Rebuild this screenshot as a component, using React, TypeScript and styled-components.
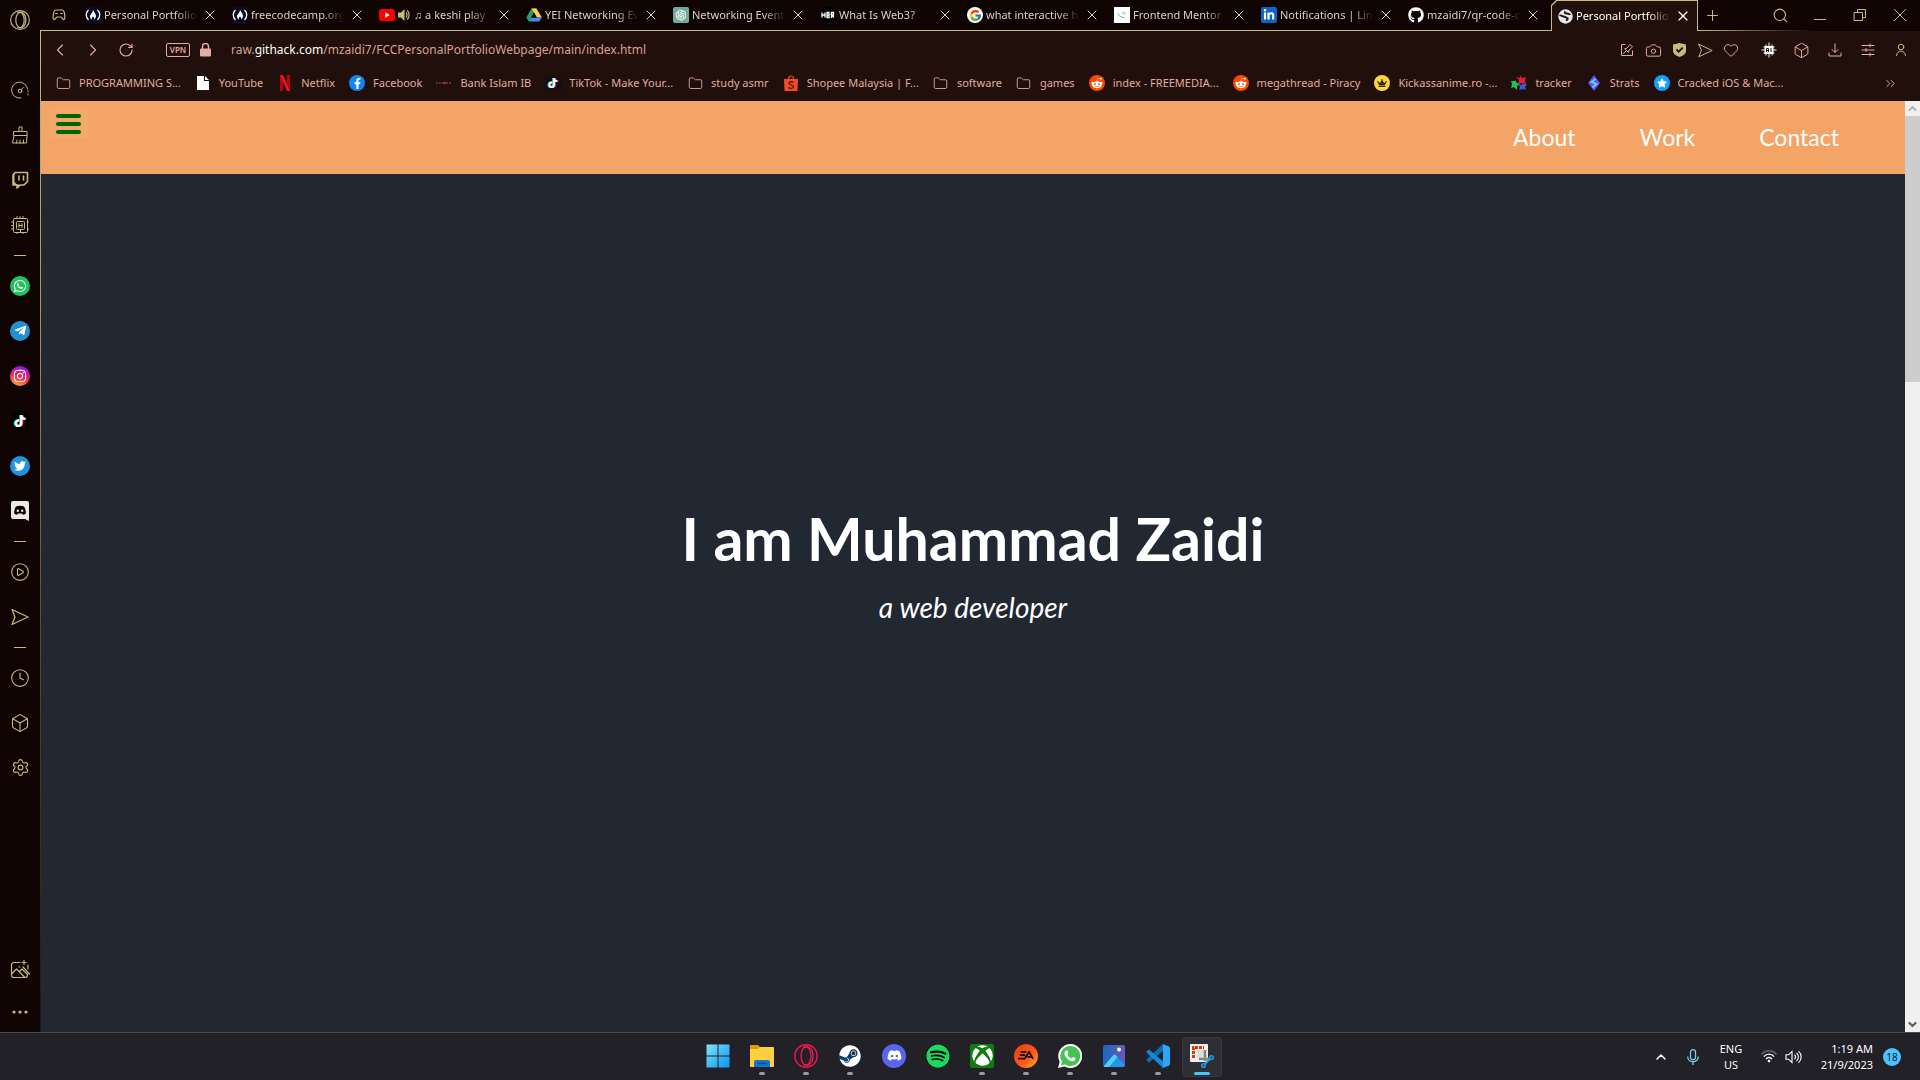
import React from "react";
import styled, { createGlobalStyle } from "styled-components";
import {
  Box, Camera, ChevronLeft, ChevronRight, ChevronUp, ChevronsRight, CirclePlay, Clock, Folder,
  Heart, Plus, RotateCw, Search, Settings, X,
} from "lucide-react";
import {
  FaDiscord, FaGithub, FaInstagram, FaLinkedinIn, FaRedditAlien, FaSpotify, FaSteam, FaTelegramPlane,
  FaTiktok, FaTwitter, FaWhatsapp, FaXbox, FaFacebookF, FaCrown, FaStar,
} from "react-icons/fa";
import { FcGoogle } from "react-icons/fc";
import { AiOutlineOpenAI } from "react-icons/ai";

const gold = "#c5bb80";
const rose = "#e2aca0";
const ui = `"Noto Sans", "Open Sans", sans-serif`;
const display = `Lato, "Open Sans", sans-serif`;

const Global = createGlobalStyle`
  * { box-sizing: border-box; }
  body { margin: 0; background: #100403; font-family: ${ui}; font-size: 11px; }
  button { border: 0; padding: 0; background: none; color: inherit; font: inherit; }
  a { color: inherit; text-decoration: none; }
  svg { display: block; flex: none; }
`;

const Desktop = styled.div`
  display: flex;
  flex-direction: column;
  height: 100vh;
  overflow: hidden;
`;
const Browser = styled.div`
  flex: 1;
  min-height: 0;
  display: flex;
`;
const Rail = styled.aside`
  width: 40px;
  flex: none;
  display: flex;
  flex-direction: column;
  background: #100403;
  color: ${gold};
`;
const RailButton = styled.button<{ $tall?: number }>`
  height: ${(p) => p.$tall || 45}px;
  display: grid;
  place-items: center;
  flex: none;
`;
const RailRule = styled.div`
  height: 16px;
  display: grid;
  place-items: center;
  flex: none;
  &::after { content: ""; width: 12px; height: 1px; background: ${gold}; }
`;
const RailGap = styled.div<{ $size?: number }>`
  flex: ${(p) => (p.$size ? "none" : "1")};
  height: ${(p) => p.$size || 0}px;
`;
const Disc = styled.span<{ $bg: string; $fg?: string; $size?: number; $square?: boolean }>`
  width: ${(p) => p.$size || 16}px;
  height: ${(p) => p.$size || 16}px;
  flex: none;
  display: grid;
  place-items: center;
  border-radius: ${(p) => (p.$square ? "2px" : "50%")};
  background: ${(p) => p.$bg};
  color: ${(p) => p.$fg || "#fff"};
`;
const Windowed = styled.div`
  flex: 1;
  min-width: 0;
  display: flex;
  flex-direction: column;
`;
const Strip = styled.div`
  height: 31px;
  flex: none;
  display: flex;
  background: #100403;
  color: ${gold};
`;
const Corner = styled.button`
  width: 41px;
  padding-right: 3px;
  border-bottom: 1px solid ${gold};
  display: grid;
  place-items: center;
`;
const TabShell = styled.div<{ $active?: boolean }>`
  width: 147px;
  flex: none;
  padding: ${(p) => (p.$active ? "1px 1px 0" : "0 0 1px")};
  background: ${gold};
  clip-path: ${(p) => (p.$active ? "polygon(0 5px, 5px 0, 100% 0, 100% 100%, 0 100%)" : "none")};
`;
const TabBody = styled.div<{ $active?: boolean }>`
  height: 100%;
  display: flex;
  align-items: center;
  gap: 3px;
  padding: 0 ${(p) => (p.$active ? 6 : 10)}px 0 ${(p) => (p.$active ? 6 : 4)}px;
  background: ${(p) => (p.$active ? "#200f0a" : "#100403")};
  color: ${(p) => (p.$active ? "#fff" : "#d6d0ce")};
  clip-path: ${(p) => (p.$active ? "polygon(0 5px, 5px 0, 100% 0, 100% 100%, 0 100%)" : "none")};
`;
const TabTitle = styled.a`
  flex: 1;
  min-width: 0;
  display: flex;
  align-items: center;
  gap: 4px;
  overflow: hidden;
  white-space: nowrap;
  line-height: 20px;
  mask-image: linear-gradient(to right, #000 76%, transparent);
`;
const TabClose = styled.button`
  width: 17px;
  height: 20px;
  display: grid;
  place-items: center;
`;
const StripEnd = styled.div`
  flex: 1;
  display: flex;
  justify-content: space-between;
  border-bottom: 1px solid;
  border-image: linear-gradient(to right, ${gold}, transparent 52%) 1;
`;
const StripButton = styled.button<{ $wide?: boolean }>`
  width: ${(p) => (p.$wide ? 40 : 28)}px;
  display: grid;
  place-items: center;
`;
const Cluster = styled.div<{ $indent?: boolean }>`
  display: flex;
  align-items: center;
  margin-left: ${(p) => (p.$indent ? 8 : 0)}px;
`;
const Frame = styled.div`
  flex: 1;
  min-height: 0;
  display: flex;
  flex-direction: column;
  padding-left: 1px;
  background: linear-gradient(${gold}, #a09258 30%, #5d4c2c 60%, #1d1712);
`;
const Toolbar = styled.div`
  height: 38px;
  flex: none;
  display: flex;
  align-items: center;
  padding: 0 3px 0 2px;
  background: #200f0a;
  color: ${rose};
`;
const ToolButton = styled.button<{ $wide?: boolean; $gold?: boolean }>`
  width: ${(p) => (p.$wide ? 33 : 26)}px;
  height: 28px;
  display: grid;
  place-items: center;
  color: ${(p) => (p.$gold ? gold : rose)};
`;
const Vpn = styled.button`
  width: 24px;
  height: 14px;
  margin: 0 10px 0 24px;
  border: 1px solid ${rose};
  border-radius: 2px;
  font-size: 8px;
  line-height: 12px;
  font-weight: 600;
`;
const Address = styled.div`
  flex: 1;
  margin-left: 20px;
  font-size: 12px;
  line-height: 20px;
  color: #d9a195;
  white-space: nowrap;
  outline: 0;
  b { font-weight: 400; color: #fff; }
`;
const Marks = styled.nav`
  height: 32px;
  flex: none;
  display: flex;
  align-items: center;
  gap: 14px;
  padding: 0 22px 4px 14px;
  background: #200f0a;
  color: ${rose};
`;
const Mark = styled.a`
  display: flex;
  align-items: center;
  gap: 8px;
  white-space: nowrap;
  line-height: 20px;
`;
const MarkIcon = styled.span`
  width: 16px;
  display: grid;
  place-items: center;
`;
const MoreMarks = styled.button`
  margin-left: auto;
`;
const View = styled.div`
  flex: 1;
  min-height: 0;
  display: flex;
`;
const Page = styled.main`
  flex: 1;
  display: flex;
  flex-direction: column;
  background: #222831;
  color: #fff;
  font-family: ${display};
`;
const SiteNav = styled.header`
  height: 73px;
  flex: none;
  display: flex;
  justify-content: space-between;
  align-items: center;
  padding: 0 66px 2px 8px;
  background: #f4a466;
`;
const Burger = styled.button`
  align-self: flex-start;
  width: 39px;
  height: 30px;
  margin-top: 7px;
  padding-top: 2px;
  display: flex;
  flex-direction: column;
  align-items: center;
  justify-content: center;
  gap: 4px;
  background: #f4a96b;
`;
const BurgerBar = styled.span`
  width: 25px;
  height: 4px;
  border-radius: 2px;
  background: #006400;
`;
const Links = styled.nav`
  display: flex;
  gap: 64px;
  font-size: 23px;
  line-height: 32px;
`;
const Hero = styled.section`
  flex: 1;
  display: flex;
  flex-direction: column;
  align-items: center;
  justify-content: center;
  gap: 16px;
  padding-bottom: 80px;
`;
const HeroTitle = styled.h1`
  margin: 0;
  font-size: 59px;
  line-height: 72px;
  font-weight: 700;
`;
const HeroText = styled.p`
  margin: 0;
  font-size: 28px;
  line-height: 32px;
  font-style: italic;
`;
const Scroll = styled.div`
  width: 15px;
  display: flex;
  flex-direction: column;
  background: #f0f0f0;
`;
const ScrollButton = styled.button<{ $dim?: boolean }>`
  height: 15px;
  display: grid;
  place-items: center;
  color: ${(p) => (p.$dim ? "#b5b5b5" : "#606060")};
`;
const Track = styled.div`
  flex: 1;
  &::before { content: ""; display: block; height: 29.5%; background: #cdcdcd; }
`;
const Taskbar = styled.footer`
  height: 48px;
  flex: none;
  display: grid;
  grid-template-columns: 1fr auto 1fr;
  border-top: 1px solid #4a4849;
  background: #212127;
  color: #fff;
`;
const Apps = styled.div`
  grid-column: 2;
  display: flex;
  gap: 4px;
  align-items: center;
`;
const TaskButton = styled.button<{ $state?: "idle" | "open" | "active" }>`
  width: 40px;
  height: 40px;
  display: grid;
  grid-template-rows: 1fr 3px;
  justify-items: center;
  align-items: center;
  padding: 3px 0 2px;
  border-radius: 4px;
  background: ${(p) => (p.$state === "active" ? "#2e2f35" : "none")};
  box-shadow: ${(p) => (p.$state === "active" ? "inset 0 0 0 1px #37383d" : "none")};
  &::after {
    content: "";
    width: ${(p) => (p.$state === "active" ? 16 : 6)}px;
    height: 3px;
    border-radius: 2px;
    background: ${(p) => (p.$state === "active" ? "#4cc2ff" : p.$state === "open" ? "#9a9a9d" : "none")};
  }
`;
const Tray = styled.div`
  display: flex;
  justify-content: flex-end;
  align-items: center;
  padding-right: 19px;
`;
const TrayButton = styled.button<{ $w: number; $align?: string }>`
  width: ${(p) => p.$w}px;
  line-height: 16px;
  display: grid;
  justify-items: ${(p) => p.$align || "center"};
`;
const Badge = styled.span`
  width: 18px;
  height: 18px;
  margin-left: 10px;
  border-radius: 50%;
  background: #4cc2ff;
  color: #10202c;
  font-size: 10px;
  line-height: 18px;
  text-align: center;
`;

type IconProps = { size?: number; w?: number; children: React.ReactNode; box?: number };
const Line = ({ size = 18, w = 1, box = 18, children }: IconProps) => (
  <svg width={size} height={size} viewBox={`0 0 ${box} ${box}`} fill="none" stroke="currentColor" strokeWidth={w} strokeLinejoin="round" strokeLinecap="round">
    {children}
  </svg>
);
const Send = ({ size = 18 }) => <Line size={size} w={1.2}><path d="M1 1.5 17 9 1 16.5 4 9Z" /></Line>;
const OperaIcon = ({ size = 20, color = gold }) => (
  <svg width={size} height={size} viewBox="0 0 24 24" fill="none" stroke={color} strokeWidth="1.4">
    <circle cx="12" cy="12" r="11.2" />
    <ellipse cx="12" cy="12" rx="5" ry="9" />
    <path d="M9 3.5c5-3 10 1 10 8.500s-5 11.500-10 8.500" />
  </svg>
);
const Fcc = () => (
  <svg width="16" height="16" viewBox="0 0 16 16" fill="none" stroke="#fff" strokeWidth="1.3">
    <path d="M0 0h16v16H0z" fill="#0a0a23" stroke="none" />
    <path d="M3.500 3C.5 5.500.5 10 3.500 13M12.500 3c3 2.500 3 7 0 10" />
    <path d="M8 2.500c.2 2 3 4 3 6.500 0 2-1.200 3-2 3.500.6-1.500-.3-2.500-1-3-.7.7-1.500 1.500-1 3C5.500 12 5 10.500 5 9.500c0-1.500 1-2 1.300-3C7.500 5.500 8 4 8 2.500Z" fill="#fff" stroke="none" />
  </svg>
);
const YouTube = () => (
  <svg width="16" height="16" viewBox="0 0 16 16"><rect y="2" width="16" height="12" rx="3" fill="#f00" /><path d="m6.300 5.300 4.400 2.700-4.400 2.700z" fill="#fff" /></svg>
);
const Speaker = () => (
  <svg width="12" height="14" viewBox="0 0 12 14" fill="none" stroke={gold} strokeWidth="1.200"><path d="M0 4.500h3L6.500 1v12L3 9.500H0z" fill={gold} stroke="none" /><path d="M8 4.500c1.300 1 1.300 4 0 5M9.200 2.500c2.500 2 2.500 7 0 9" /></svg>
);
const Drive = () => (
  <svg width="16" height="16" viewBox="0 0 16 16"><path d="M5.500 1.500h5l-7.700 13L.3 10.500z" fill="#1ea362" /><path d="M5.500 1.500h5l5.300 9h-5z" fill="#ffcf48" /><path d="M5 10.500h10.800l-2.500 4H2.800z" fill="#4688f4" /><path d="m8 5.500 2.800 5H5z" fill="#100403" /></svg>
);
const Globe = () => (
  <svg width="15" height="15" viewBox="0 0 15 15"><circle cx="7.500" cy="7.500" r="7.200" fill="#e6e6ec" /><path d="M1.500 6.500c2-.5 2.500.8 4 1s2.500 1 4 1.500c1 1-.5 2-1.500 2.500M7.500 2.500c-1.500 1-.5 2 1.500 2 1.500.2 2.500 1 3.500.5" stroke="#200f0a" strokeWidth="1.800" fill="none" /></svg>
);
const Mentor = () => (
  <svg width="16" height="16" viewBox="0 0 16 16" fill="none"><path d="M0 0h16v16H0z" fill="#fff" /><path d="M4 6.500c1 2.500 2.500 4 6.500 4" stroke="#8d97ba" /><path d="M9 4.500v2.500m2-2-1 1.500 1.500 1" stroke="#7cc7d0" /></svg>
);
const TikTok = ({ size = 10 }) => <FaTiktok size={size} style={{ filter: "drop-shadow(-1px 0 #25f4ee) drop-shadow(1px 0 #fe2c55)" }} />;
const FolderIcon = () => <Folder size={15} strokeWidth={1.4} />;
const Reddit = () => <Disc $bg="#ff4500"><FaRedditAlien size={12} /></Disc>;

type TabInfo = { icon: React.ReactNode; title: React.ReactNode };
const tabs: TabInfo[] = [
  { icon: <Fcc />, title: "Personal Portfolio" },
  { icon: <Fcc />, title: "freecodecamp.org" },
  { icon: <YouTube />, title: <><Speaker /> ♫ a keshi play</> },
  { icon: <Drive />, title: "YEI Networking Ev" },
  { icon: <Disc $bg="#74aa9c" $square><AiOutlineOpenAI size={14} /></Disc>, title: "Networking Event" },
  {
    icon: (
      <Disc $bg="#000">
        <svg width="14" height="8" viewBox="0 0 14 8" stroke="#fff" strokeWidth="1.300" fill="none"><path d="M1 1.500v5M4 1.500v5M1 4h3M6 1.500h2v5H6zM6 4h2M10.500 7V1.500h2V4h-2l2.500 2.500" /></svg>
      </Disc>
    ),
    title: "What Is Web3?",
  },
  { icon: <Disc $bg="#fff"><FcGoogle size={13} /></Disc>, title: "what interactive h" },
  { icon: <Mentor />, title: "Frontend Mentor" },
  { icon: <Disc $bg="#0a66c2" $square><FaLinkedinIn size={12} /></Disc>, title: "Notifications | Link" },
  { icon: <FaGithub size={16} color="#fff" />, title: "mzaidi7/qr-code-c" },
];

const bookmarks: [React.ReactNode, string][] = [
  [<FolderIcon />, "PROGRAMMING S..."],
  [<svg width="12" height="14" viewBox="0 0 12 14" fill="#fff"><path d="M0 0h7v5h5v9H0zM8 0l4 4H8z" /></svg>, "YouTube"],
  [<svg width="10" height="16" viewBox="0 0 10 16"><path d="M0 0h3v16H0zM7 0h3v16H7z" fill="#b00710" /><path d="M0 0h3l7 16H7z" fill="#f5121d" /></svg>, "Netflix"],
  [<Disc $bg="#1185f2"><FaFacebookF size={11} /></Disc>, "Facebook"],
  [<svg width="16" height="6" viewBox="0 0 16 6" fill="none"><path d="M0 3h7M10 3h6" stroke="#77605b" strokeDasharray="2 1" /><path d="M7 2h3v2H7z" fill="#a52b38" /></svg>, "Bank Islam IB"],
  [<Disc $bg="#170c16" $square><TikTok /></Disc>, "TikTok - Make Your..."],
  [<FolderIcon />, "study asmr"],
  [<svg width="14" height="16" viewBox="0 0 14 16" fill="none"><path d="M0 4h14l-.5 12H.5z" fill="#f04b2b" /><path d="M4.500 4c0-4 5-4 5 0" stroke="#f04b2b" strokeWidth="1.200" /><path d="M9.300 7.500C8 6.300 5 6.500 5 8.200c0 2 4.500 1.500 4.500 3.500 0 2-3.500 2-5 .7" stroke="#5a1509" strokeWidth="1.300" /></svg>, "Shopee Malaysia | F..."],
  [<FolderIcon />, "software"],
  [<FolderIcon />, "games"],
  [<Reddit />, "index - FREEMEDIA..."],
  [<Reddit />, "megathread - Piracy"],
  [<Disc $bg="#fcd93a" $fg="#3a2b08"><FaCrown size={10} /></Disc>, "Kickassanime.ro -..."],
  [<svg width="16" height="16" viewBox="0 0 16 16"><path d="m9 0 2 3 4-1-1 4 1 3-4-1-4 1 1-4-3-3 4 1z" fill="#e01f3f" /><path d="m4 5 2 3 3 1-3 2v4l-3-3-3 1 1-4-1-3h4z" fill="#17c653" /><path d="m11 7 1 2h4l-2 3 1 3-3-1-4 1 1-3-2-3 4 1z" fill="#3f55e8" /></svg>, "tracker"],
  [<svg width="12" height="16" viewBox="0 0 12 16"><path d="m6 0 6 8-6 8-6-8z" fill="#6a4ff0" /><path d="M7.500 4 3.500 7l5 2-4 3.500" stroke="#58dcf6" strokeWidth="1.800" fill="none" /></svg>, "Strats"],
  [<Disc $bg="#12a0ff"><FaStar size={10} /></Disc>, "Cracked iOS & Mac..."],
];

const Shot = () => (
  <svg width="24" height="24" viewBox="0 0 24 24" fill="none">
    <rect x="0" y="0" width="18" height="18" rx="1" fill="#f1f1f1" />
    <path d="M3.500 14V3.500H14" stroke="#d83b01" strokeWidth="3" strokeDasharray="3 1" />
    <path d="M7 6h7v8H7z" fill="#dcdcdc" /><path d="M15 6v11M9 15h11" stroke="#7f868c" strokeWidth="2.500" />
    <circle cx="21.500" cy="13.500" r="1.800" stroke="#1e9ce8" strokeWidth="1.600" /><circle cx="13.500" cy="21.500" r="1.800" stroke="#1e9ce8" strokeWidth="1.600" />
    <path d="m15 20 5-5" stroke="#1e9ce8" strokeWidth="1.800" />
  </svg>
);

type AppInfo = { name: string; state: "idle" | "open" | "active"; icon: React.ReactNode };
const apps: AppInfo[] = [
  {
    name: "Start", state: "idle", icon: (
      <svg width="24" height="24" viewBox="0 0 24 24"><defs><linearGradient id="win" x1="0" y1="0" x2="1" y2="1"><stop stopColor="#7fe6fb" /><stop offset="1" stopColor="#0a92f5" /></linearGradient></defs><path d="M.5.5h11v11H.5zM12.500.5h11v11h-11zM.5 12.500h11v11H.5zM12.500 12.500h11v11h-11z" fill="url(#win)" /></svg>
    ),
  },
  {
    name: "File Explorer", state: "open", icon: (
      <svg width="24" height="22" viewBox="0 0 24 22"><path d="M0 1q0-1 1-1h7l2 2v4H0z" fill="#e09a08" /><path d="M0 4h8l2-2h13q1 0 1 1v18q0 1-1 1H1q-1 0-1-1z" fill="#ffcf3e" /><path d="M4 22v-5q0-2 2-2h12q2 0 2 2v5z" fill="#1275cf" /><path d="M7 18.500h10" stroke="#0b4f94" strokeWidth="1.500" /></svg>
    ),
  },
  { name: "Opera GX", state: "open", icon: <OperaIcon size={24} color="#e21c4a" /> },
  { name: "Steam", state: "open", icon: <Disc $bg="linear-gradient(#101c3a,#0b5d8d)" $size={22}><FaSteam size={22} /></Disc> },
  { name: "Discord", state: "idle", icon: <Disc $bg="#5865f2" $size={24}><FaDiscord size={15} /></Disc> },
  { name: "Spotify", state: "idle", icon: <Disc $bg="#000" $size={24}><FaSpotify size={24} color="#1ed760" /></Disc> },
  { name: "Xbox", state: "open", icon: <Disc $bg="#107c10" $size={24} $square><FaXbox size={21} /></Disc> },
  {
    name: "EA", state: "open", icon: (
      <Disc $bg="linear-gradient(135deg,#e23c16,#ff5a1c 60%,#ffb21c)" $size={24}>
        <svg width="16" height="9" viewBox="0 0 18 10" fill="none" stroke="#140804" strokeWidth="2"><path d="M3 1h6.500M2 4.500h6M0 8.500h7.500L12.500.8l4.500 8M10.500 6.500h5" /></svg>
      </Disc>
    ),
  },
  {
    name: "WhatsApp", state: "open", icon: (
      <svg width="24" height="24" viewBox="0 0 24 24"><path d="M12 0a12 12 0 1 1-5.500 22.500L0 24l1.700-6.200A12 12 0 0 1 12 0" fill="#fff" /><path d="M12 2a10 10 0 1 1-5 18.500l-4 1 1-4A10 10 0 0 1 12 2" fill="#45c254" /><path d="M8.300 6.300c.5-.3 1 0 1.200.4l.8 1.900c.2.7-1 1.400-.9 1.800.7 1.800 2.200 3.100 4.100 3.900.6.1 1.300-1.500 1.900-1.200l2 1c.6.4-.1 2-.7 2.500-1.200 1-3 .8-4.500.1-2.400-1-4.600-3.200-5.500-5.600-.6-1.500-.1-3.800 1.600-4.800z" fill="#fff" /></svg>
    ),
  },
  {
    name: "Photos", state: "open", icon: (
      <svg width="22" height="22" viewBox="0 0 22 22"><defs><linearGradient id="ph"><stop stopColor="#1769c4" /><stop offset="1" stopColor="#6b58b8" /></linearGradient></defs><rect width="22" height="22" rx="2" fill="url(#ph)" /><circle cx="16" cy="4.500" r="2" fill="#fff" /><path d="m1 21 9.500-11q1-1 2 0L22 20q-.5 2-2 2H2q-1 0-1-1" fill="#1e9ae6" /><path d="m1 21 9.500-11q1-1 2 0l2 2L6 22H2q-1 0-1-1" fill="#4fd0f7" /></svg>
    ),
  },
  {
    name: "Visual Studio Code", state: "open", icon: (
      <svg width="24" height="24" viewBox="0 0 24 24"><path d="M18 6 3 18.500.5 16.500v-1L17 0z" fill="#0a6fb8" /><path d="M18 18 3 5.500.5 7.500v1L17 24z" fill="#1488d4" /><path d="m17 0 6 2.500q1 .5 1 1.500v16q0 1-1 1.500L17 24z" fill="#2aa6f2" /></svg>
    ),
  },
  { name: "Snipping Tool", state: "active", icon: <Shot /> },
];

export default function App() {
  return (
    <Desktop>
      <Global />
      <Browser>
        <Rail>
          <RailButton $tall={40} aria-label="Opera menu"><OperaIcon /></RailButton>
          <RailGap $size={27} />
          <RailButton aria-label="GX Control"><Line><path d="M10 17A8 8 0 1 1 16.500 8" /><circle cx="9" cy="10" r="1.800" /><path d="m10.300 8.700 2-2.200" /><path d="M17 10v5" strokeDasharray="1 2" /></Line></RailButton>
          <RailButton aria-label="GX Cleaner"><Line><path d="M8 5.500V1h3v4.500M3 5.500h13v4H3zM3 9.500 1.500 17h14l.5-7.500M5.500 17l.5-3M9 17v-3M12.500 17v-3" /></Line></RailButton>
          <RailButton aria-label="Twitch"><Line w={1.6}><path d="M4 1.500h12.500v9L13 14H9.500L6 17v-3H2V4z" /><path d="M2 4v10h4v3l3-3.500H6L3.500 11V2.500z" fill="currentColor" stroke="none" /><path d="M8 5v4M12.500 5v4" /></Line></RailButton>
          <RailButton aria-label="Limiter"><Line><rect x="2.500" y="2.500" width="14" height="14" rx="1" /><rect x="5.500" y="5.500" width="8" height="8" rx="1" /><path d="M8 7.500v4M11 7.500v4M8 9.500h3M6 .5v2M9 .5v2M12 .5v2M6 16.500v1M12 16.500v1M.5 6h2M.5 9.500h2M.5 13h2M16.500 6h1M16.500 13h1M9.500 13.500v3" /></Line></RailButton>
          <RailRule />
          <RailButton aria-label="WhatsApp"><Disc $bg="#22c35e" $size={20}><FaWhatsapp size={14} /></Disc></RailButton>
          <RailButton aria-label="Telegram"><Disc $bg="#2291d0" $size={20}><FaTelegramPlane size={13} /></Disc></RailButton>
          <RailButton aria-label="Instagram"><Disc $bg="linear-gradient(20deg,#ffb52e 5%,#f5264f 45%,#b115c9 75%,#6a22e8)" $size={20}><FaInstagram size={14} /></Disc></RailButton>
          <RailButton aria-label="TikTok"><Disc $bg="#000" $size={20}><TikTok size={12} /></Disc></RailButton>
          <RailButton aria-label="Twitter"><Disc $bg="#1c94e0" $size={20}><FaTwitter size={12} /></Disc></RailButton>
          <RailButton aria-label="Discord"><svg width="18" height="20" viewBox="0 0 18 20"><path d="M2 0h14q2 0 2 2v18l-4-2H2q-2 0-2-2V2q0-2 2-2" fill="#ebe8ea" /><path d="M5 5.500c2.500-1 5.500-1 8 0 1.500 2.200 2 4.500 1.800 7-1 .8-2 1.200-3 1.300l-.8-1.300H7l-.8 1.300c-1-.1-2-.5-3-1.300-.2-2.500.3-4.800 1.800-7" fill="#100403" /><circle cx="6.800" cy="9.700" r="1.200" fill="#ebe8ea" /><circle cx="11.200" cy="9.700" r="1.200" fill="#ebe8ea" /></svg></RailButton>
          <RailRule />
          <RailButton aria-label="Player"><CirclePlay size={20} strokeWidth={1.3} /></RailButton>
          <RailButton aria-label="My Flow"><Send /></RailButton>
          <RailRule />
          <RailButton aria-label="History"><Clock size={20} strokeWidth={1.3} /></RailButton>
          <RailButton aria-label="Extensions"><Box size={20} strokeWidth={1.3} /></RailButton>
          <RailButton aria-label="Settings"><Settings size={19} strokeWidth={1.4} /></RailButton>
          <RailGap />
          <RailButton aria-label="Wallpapers"><Line size={20} box={20} w={1.2}><path d="M10 2.500H4Q1.500 2.500 1.500 5v10Q1.500 17.500 4 17.500h11Q17.500 17.500 17.500 15v-1M1.500 14l5-5 8 8M9.500 11.500 12 9l5 5M12 2.500h4M14 .5v4M13 7l6.500 7M18 5v4M9 7h1" /></Line></RailButton>
          <RailButton $tall={40} aria-label="More"><svg width="16" height="4" viewBox="0 0 16 4" fill="currentColor"><circle cx="2" cy="2" r="1.600" /><circle cx="8" cy="2" r="1.600" /><circle cx="14" cy="2" r="1.600" /></svg></RailButton>
        </Rail>
        <Windowed>
          <Strip>
            <Corner aria-label="GX Corner"><Line size={14} box={14} w={1.2}><path d="M4 2h6c3 0 3.500 9 2 9.500S10 9 9 9H5c-1 0-1.500 3-3 2.500S1 2 4 2Z" /><path d="M3.500 5.500h2M8.500 5.500h2" /></Line></Corner>
            {tabs.map((t, i) => (
              <TabShell key={i}>
                <TabBody>
                  {t.icon}
                  <TabTitle href="#">{t.title}</TabTitle>
                  <TabClose aria-label="Close tab"><X size={16} strokeWidth={1.5} /></TabClose>
                </TabBody>
              </TabShell>
            ))}
            <TabShell $active>
              <TabBody $active>
                <Globe />
                <TabTitle href="#">Personal Portfolio</TabTitle>
                <TabClose aria-label="Close tab"><X size={16} strokeWidth={1.8} /></TabClose>
              </TabBody>
            </TabShell>
            <StripEnd>
              <StripButton aria-label="New tab"><Plus size={17} strokeWidth={1.5} /></StripButton>
              <Cluster>
                <StripButton $wide aria-label="Search tabs"><Search size={17} strokeWidth={1.5} /></StripButton>
                <StripButton $wide aria-label="Minimize"><Line size={12} box={12}><path d="M0 10.500h12" /></Line></StripButton>
                <StripButton $wide aria-label="Restore"><Line size={14} box={14}><path d="M1.500 4.500h8v8h-8zM4.500 4.500v-3h8v8h-3" /></Line></StripButton>
                <StripButton $wide aria-label="Close window"><Line size={14} box={14}><path d="m1.500 1.500 11 11M12.500 1.500l-11 11" /></Line></StripButton>
              </Cluster>
            </StripEnd>
          </Strip>
          <Frame>
            <Toolbar>
              <ToolButton $wide aria-label="Back"><ChevronLeft size={20} strokeWidth={1.4} /></ToolButton>
              <ToolButton $wide aria-label="Forward"><ChevronRight size={20} strokeWidth={1.4} /></ToolButton>
              <ToolButton $wide aria-label="Reload"><RotateCw size={16} strokeWidth={1.7} /></ToolButton>
              <Vpn>VPN</Vpn>
              <svg width="11" height="14" viewBox="0 0 11 14"><path d="M2.500 6V3.500a3 3 0 0 1 6 0V6" fill="none" stroke={rose} strokeWidth="1.500" /><rect y="5.500" width="11" height="8" rx="1" fill={rose} /></svg>
              <Address contentEditable suppressContentEditableWarning role="textbox" aria-label="Address" spellCheck={false}>
                raw.<b>githack.com</b>/mzaidi7/FCCPersonalPortfolioWebpage/main/index.html
              </Address>
              <ToolButton aria-label="Pin"><Line size={14} box={14}><path d="M5 1.500H1.500v11h11V8M3.500 10.500 6.500 7.500M5 6l3.500 3.500.5-2.500 3.500-3L10 1.500 7 5z" /></Line></ToolButton>
              <ToolButton aria-label="Snapshot"><Camera size={17} strokeWidth={1.4} /></ToolButton>
              <ToolButton aria-label="Ad blocker"><svg width="13" height="14" viewBox="0 0 13 14"><path d="M6.500 0 13 1.500V8c0 3-3.500 5-6.500 6C3.500 13 0 11 0 8V1.500z" fill={gold} /><path d="m3.500 6.500 2.200 2.200 4-4" stroke="#200f0a" strokeWidth="1.800" fill="none" /></svg></ToolButton>
              <ToolButton $gold aria-label="Send to My Flow"><Send size={15} /></ToolButton>
              <ToolButton aria-label="Bookmark"><Heart size={16} strokeWidth={1.4} /></ToolButton>
              <Cluster $indent>
                <ToolButton $wide aria-label="Aria"><svg width="16" height="16" viewBox="0 0 16 16"><path d="M8 .500v15M.5 8h15M5 2.500v11M11 2.500v11M2.500 5h11M2.500 11h11" stroke="#8d8280" strokeWidth="2.200" /><rect x="3.500" y="4" width="9" height="8" fill="#fff" /><path d="M5.500 10V6.500h2V10M5.500 8.500h2M10 6v4" stroke="#222" fill="none" /></svg></ToolButton>
                <ToolButton $wide aria-label="Extensions"><Box size={17} strokeWidth={1.4} /></ToolButton>
                <ToolButton $wide aria-label="Downloads"><Line size={14} box={14}><path d="M7 1v8M4 6.500 7 9.500l3-3M1 10v3h12v-3" /></Line></ToolButton>
                <ToolButton $wide aria-label="Easy setup"><Line size={14} box={14}><path d="M1 2.500h12M1 7h12M1 11.500h12M9 1v3M5 5.500v3M9 10v3" /></Line></ToolButton>
                <ToolButton $wide $gold aria-label="Profile"><Line size={14} box={14}><circle cx="7" cy="4" r="2.800" /><path d="M2.500 12.500C3 6.500 11 6.500 11.500 12.500" /></Line></ToolButton>
              </Cluster>
            </Toolbar>
            <Marks aria-label="Bookmarks">
              {bookmarks.map(([icon, label], i) => (
                <Mark href="#" key={i}><MarkIcon>{icon}</MarkIcon>{label}</Mark>
              ))}
              <MoreMarks aria-label="More bookmarks"><ChevronsRight size={15} strokeWidth={1.5} /></MoreMarks>
            </Marks>
            <View>
              <Page>
                <SiteNav>
                  <Burger aria-label="Menu"><BurgerBar /><BurgerBar /><BurgerBar /></Burger>
                  <Links><a href="#about">About</a><a href="#work">Work</a><a href="#contact">Contact</a></Links>
                </SiteNav>
                <Hero>
                  <HeroTitle>I am Muhammad Zaidi</HeroTitle>
                  <HeroText>a web developer</HeroText>
                </Hero>
              </Page>
              <Scroll>
                <ScrollButton $dim aria-label="Scroll up"><Line size={9} box={9} w={2.2}><path d="M1.500 6 4.500 3l3 3" /></Line></ScrollButton>
                <Track />
                <ScrollButton aria-label="Scroll down"><Line size={9} box={9} w={2.2}><path d="m1.500 3 3 3 3-3" /></Line></ScrollButton>
              </Scroll>
            </View>
          </Frame>
        </Windowed>
      </Browser>
      <Taskbar>
        <Apps>
          {apps.map((a) => <TaskButton key={a.name} $state={a.state} aria-label={a.name}>{a.icon}</TaskButton>)}
        </Apps>
        <Tray>
          <TrayButton $w={32} aria-label="Hidden icons"><ChevronUp size={16} strokeWidth={2.2} /></TrayButton>
          <TrayButton $w={32} aria-label="Microphone"><svg width="12" height="16" viewBox="0 0 12 16" fill="none" stroke="#7cc8e6" strokeWidth="1.300"><rect x="3.500" y=".7" width="5" height="10" rx="2.500" /><path d="M.7 7.500c0 7 10.600 7 10.600 0M6 12.800V16" /></svg></TrayButton>
          <TrayButton $w={44}><span>ENG</span><span>US</span></TrayButton>
          <TrayButton $w={32} aria-label="Network"><svg width="16" height="13" viewBox="0 0 16 13" fill="none" stroke="#fff" strokeWidth="1.300"><path d="M.5 4.500c4-5 11-5 15 0" stroke="#66666b" /><path d="M2.800 6.700c3-3.500 7.400-3.500 10.400 0M5 9c1.700-2 4.300-2 6 0" /><circle cx="8" cy="11" r="1.300" fill="#fff" stroke="none" /></svg></TrayButton>
          <TrayButton $w={16} aria-label="Volume"><svg width="17" height="14" viewBox="0 0 17 14" fill="none" stroke="#fff" strokeWidth="1.100"><path d="M1 4.800h2.500L7 1.500v11L3.500 9.200H1zM9.500 4.800c1.300 1 1.300 3.400 0 4.400M11.500 3c2.500 2 2.500 6 0 8M13.500 1.200c3.500 3 3.500 8.600 0 11.600" /></svg></TrayButton>
          <TrayButton $w={72} $align="end"><span>1:19 AM</span><span>21/9/2023</span></TrayButton>
          <Badge>18</Badge>
        </Tray>
      </Taskbar>
    </Desktop>
  );
}
